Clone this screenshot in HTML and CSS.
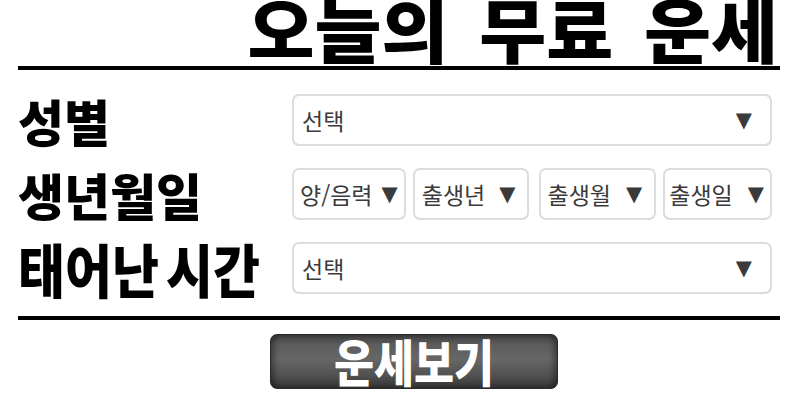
FILE: index.html
```html
<!DOCTYPE html>
<html lang="ko">
<head>
<meta charset="utf-8">
<link rel="stylesheet" href="styles.css">
</head>
<body>
<div class="page">
  <h1 class="title"><span>오늘의 무료 운세</span></h1>
  <div class="form">
    <div class="row">
      <div class="label">성별</div>
      <div class="field">
        <div class="select wide"><span>선택</span><span class="arrow">▼</span></div>
      </div>
    </div>
    <div class="row">
      <div class="label">생년월일</div>
      <div class="field multi">
        <div class="select s1"><span>양/음력</span><span class="arrow">▼</span></div>
        <div class="select s2"><span>출생년</span><span class="arrow">▼</span></div>
        <div class="select s3"><span>출생월</span><span class="arrow">▼</span></div>
        <div class="select s4"><span>출생일</span><span class="arrow">▼</span></div>
      </div>
    </div>
    <div class="row">
      <div class="label"><span class="condensed">태어난 시간</span></div>
      <div class="field">
        <div class="select wide"><span>선택</span><span class="arrow">▼</span></div>
      </div>
    </div>
  </div>
  <div class="actions">
    <button class="btn"><span>운세보기</span></button>
  </div>
</div>
</body>
</html>
```
FILE: styles.css
```css
html, body {
  margin: 0;
  padding: 0;
  background: #fff;
}
body {
  font-family: "Noto Sans CJK KR", "Noto Sans", sans-serif;
  color: #000;
}
.page {
  width: 800px;
  height: 400px;
  overflow: hidden;
}
.title {
  margin: 0 20px 0 18px;
  height: 70px;
  box-sizing: border-box;
  border-bottom: 4px solid #000;
  font-size: 70px;
  font-weight: 900;
  word-spacing: 10px;
  display: flex;
  justify-content: flex-end;
  align-items: flex-end;
}
.title span {
  display: block;
  line-height: 56px;
  margin-bottom: 10px;
  margin-right: 2px;
  transform: scaleX(1.04);
  transform-origin: right center;
  white-space: nowrap;
}
.form {
  padding-top: 24px;
}
.row {
  display: flex;
  align-items: center;
  height: 52px;
  margin-bottom: 22px;
  padding-left: 18px;
}
.label {
  width: 274px;
  font-size: 50px;
  font-weight: 900;
  line-height: 1;
  white-space: nowrap;
}
.condensed {
  display: inline-block;
  transform: scaleX(0.88);
  transform-origin: left center;
  font-size: 58px;
  word-spacing: -8px;
}
.field {
  display: flex;
  width: 480px;
}
.select {
  height: 52px;
  box-sizing: border-box;
  border: 2px solid #dcdcdc;
  border-radius: 7px;
  display: flex;
  align-items: center;
  justify-content: space-between;
  padding: 0 6px 0 7px;
  font-size: 23px;
  color: #3a3a3a;
  background: #fff;
}
.wide {
  width: 480px;
  padding-left: 8px;
  padding-right: 18px;
}
.arrow {
  font-family: "DejaVu Sans", sans-serif;
  font-size: 21px;
  color: #3a3a3a;
}
.multi {
  gap: 7px;
}
.s1 { width: 114px; padding-left: 6px; padding-right: 6px; }
.s2 { width: 116px; padding-right: 11px; }
.s3 { width: 118px; margin-left: 3px; padding-right: 12px; }
.s4 { width: 109px; padding-left: 4px; padding-right: 6px; }
.actions {
  margin: 0 20px 0 18px;
  border-top: 4px solid #000;
  display: flex;
  justify-content: flex-start;
  padding-top: 14px;
  padding-left: 252px;
}
.btn {
  width: 288px;
  height: 55px;
  border: 1px solid #2a2a2a;
  border-radius: 7px;
  background: linear-gradient(#404040 0%, #5c5c5c 18%, #676767 45%, #505050 78%, #333 100%);
  box-shadow: inset 6px 0 6px -3px rgba(0,0,0,0.4), inset -6px 0 6px -3px rgba(0,0,0,0.4);
  color: #fff;
  font-family: "Noto Sans CJK KR", sans-serif;
  font-weight: 900;
  font-size: 50px;
  line-height: 1;
  padding: 0;
  display: flex;
  align-items: center;
  justify-content: center;
}
.btn span {
  display: inline-block;
  transform: scaleX(0.87);
  margin-top: -4px;
}
```
